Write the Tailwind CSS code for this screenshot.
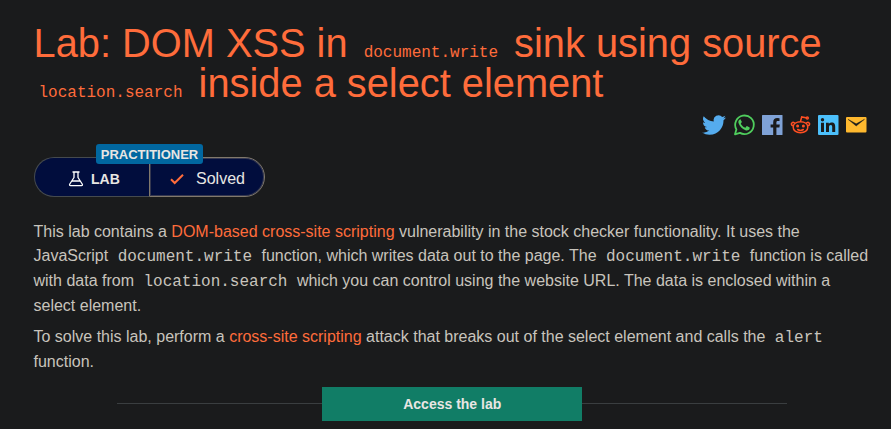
<!DOCTYPE html>
<html lang="en">
<head>
<meta charset="utf-8">
<title>Lab: DOM XSS</title>
<script src="https://cdn.jsdelivr.net/npm/@tailwindcss/browser@4"></script>
</head>
<body class="h-[429px] overflow-hidden bg-[#1a1b1c] font-['Liberation_Sans',Arial,sans-serif] text-[#c8c4bc]">
<main class="flex h-full flex-col pl-[33.5px] pr-5 pt-[23px]">
  <h1 class="text-[39.8px] leading-10 text-[#ff6c3b]">Lab: DOM XSS in <code class="px-[5px] font-['Liberation_Mono',monospace] text-base leading-none">document.write</code> sink using source<br><code class="px-[5px] font-['Liberation_Mono',monospace] text-base leading-none">location.search</code> inside a select element</h1>

  <div class="mt-[10px] flex h-6 items-center justify-end gap-1 pr-[3px]">
    <svg class="mr-[2px] size-6" viewBox="0 0 24 24" fill="#55acee"><path d="M24 4.6a10 10 0 0 1-2.8.8 5 5 0 0 0 2.1-2.7 10 10 0 0 1-3.1 1.2A4.9 4.9 0 0 0 11.8 8.400 14 14 0 0 1 1.700 3.200a4.900 4.900 0 0 0 1.500 6.600 4.900 4.900 0 0 1-2.200-.6v.1a4.900 4.900 0 0 0 3.900 4.800 5 5 0 0 1-2.200.1 4.900 4.900 0 0 0 4.600 3.400A9.900 9.900 0 0 1 0 19.600a14 14 0 0 0 7.500 2.200c9.100 0 14-7.500 14-14v-.6A10 10 0 0 0 24 4.600z"/></svg>
    <svg class="size-6" viewBox="0 0 24 24"><path d="M3 21.300l1.400-4.900a9.300 9.300 0 1 1 3.500 3.500z" fill="none" stroke="#4fce5d" stroke-width="1.800" stroke-linejoin="round"/><path d="M8.800 6.900c-.3-.6-.7-.6-1-.5-1.300.7-1.800 2.300-1.200 3.900 1.200 3.300 3.500 5.600 6.900 6.900 1.700.6 3.600 0 4.100-1.500.2-.8.2-1.200-.3-1.500l-2-1c-.4-.2-.7 0-.9.3l-.8 1c-.2.300-.5.3-.8.1-1.800-.8-3-2-3.900-3.600-.1-.3-.1-.5.1-.8l.7-.9c.2-.3.1-.5 0-.8z" fill="#4fce5d"/></svg>
    <svg class="size-6" viewBox="0 0 24 24"><rect x="2" y="2" width="20.500" height="20" rx=".5" fill="#7fa2d6"/><path d="M13.200 22v-7.500h-2.600v-3h2.600V9.200c0-2.700 1.600-4.100 4-4.100l2.300.1v2.800h-1.600c-1.300 0-1.500.6-1.500 1.500v2h3.400l-.4 3h-3V22z" fill="#1a1b1c"/></svg>
    <svg class="size-6" viewBox="0 0 24 24" fill="none" stroke="#ff4f22" stroke-width="1.500" stroke-linecap="round"><path d="M12.500 8.800c4.500 0 7.300 2.400 7.300 5.400s-2.800 5.500-7.300 5.500-7.300-2.500-7.300-5.500 2.800-5.400 7.300-5.400zM12.500 8.500l1.200-4.600 4.300.9M5.100 12.800c-1.800-.4-2.200-2.200-1.100-3 1-.8 2.300-.4 2.900.5M19.900 12.800c1.800-.4 2.200-2.200 1.100-3-1-.8-2.300-.4-2.900.5M9.700 16.500c1.700 1.100 3.900 1.100 5.600 0"/><circle cx="19.300" cy="4.900" r="1"/><g fill="#ff4f22" stroke="none"><circle cx="9.600" cy="13" r="1.500"/><circle cx="15.400" cy="13" r="1.500"/></g></svg>
    <svg class="size-6" viewBox="0 0 24 24"><rect x="2" y="2" width="20.500" height="20" rx="1" fill="#4cc0fb"/><g fill="#1a1b1c"><circle cx="6.500" cy="6.700" r="1.700"/><path d="M5 9.700h3V19H5zM10 9.700h2.800v1.300c.6-1 1.600-1.500 2.900-1.500 2.900 0 3.500 1.900 3.500 4.400V19h-3v-4.600c0-1.100 0-2.500-1.500-2.500s-1.700 1.200-1.700 2.400V19h-3z"/></g></svg>
    <svg class="size-6" viewBox="0 0 24 24"><rect x="2" y="4" width="20.500" height="15.500" rx="1" fill="#ffb92e"/><path d="M4 6.300L12.200 13 20.500 6.300 12.200 10.800z" fill="#1a1b1c" stroke="#1a1b1c" stroke-width=".4"/></svg>
  </div>

  <div class="relative mt-[20px] flex h-10 w-[231.500px] shrink-0 rounded-full">
    <div class="flex w-[115px] items-center rounded-l-full border border-r-0 border-[#454a4e] bg-[#010d3d] pl-[33.500px] pt-1 text-[#e8e6e3]">
      <svg class="h-4 w-[16px]" viewBox="0 0 16 16" fill="none" stroke="#fff" stroke-width="1.300" stroke-linejoin="round"><path d="M4.500 1h7M6 1v5.500L1.800 13c-.6 1-.1 1.700.8 1.700h10.800c.9 0 1.400-.7.8-1.700L10 6.500V1M4 10h8"/></svg>
      <span class="ml-[7px] text-sm font-bold">LAB</span>
    </div>
    <div class="flex w-[116.500px] items-center rounded-r-full border border-[#81796c] bg-[#010d3d] pl-5 pt-1 text-[#e8e6e3] ring-1 ring-inset ring-[#81796c]/40">
      <svg class="h-3 w-[14px]" viewBox="0 0 14 12" fill="none" stroke="#ff6c3b" stroke-width="2"><path d="M1 6.200L4.700 10 13 1.700"/></svg>
      <span class="ml-[12.500px] text-base">Solved</span>
    </div>
    <span class="absolute -top-[13px] left-[62.500px] h-5 w-[107px] rounded-[3px] bg-[#0167a0] text-center text-[13px] font-bold leading-[21px] text-[#e8e6e3]">PRACTITIONER</span>
  </div>

  <div class="mt-[22.600px] whitespace-nowrap text-base leading-[24.800px]">
    <p>This lab contains a <a class="text-[#ff6c3b]">DOM-based cross-site scripting</a> vulnerability in the stock checker functionality. It uses the<br>JavaScript <code class="px-[5px] font-['Liberation_Mono',monospace] text-base leading-none">document.write</code> function, which writes data out to the page. The <code class="px-[5px] font-['Liberation_Mono',monospace] text-base leading-none">document.write</code> function is called<br>with data from <code class="px-[5px] font-['Liberation_Mono',monospace] text-base leading-none">location.search</code> which you can control using the website URL. The data is enclosed within a<br>select element.</p>
    <p class="mt-1.5">To solve this lab, perform a <a class="text-[#ff6c3b]">cross-site scripting</a> attack that breaks out of the select element and calls the <code class="px-[5px] font-['Liberation_Mono',monospace] text-base leading-none">alert</code><br>function.</p>
  </div>

  <div class="mt-[12.400px] flex w-[670px] shrink-0 items-center self-center">
    <div class="h-px flex-1 bg-[#3a3e40]"></div>
    <a class="h-[34px] w-[260px] bg-[#117d66] text-center text-sm font-bold leading-[34px] text-[#e8e6e3]">Access the lab</a>
    <div class="h-px flex-1 bg-[#3a3e40]"></div>
  </div>
</main>
</body>
</html>
